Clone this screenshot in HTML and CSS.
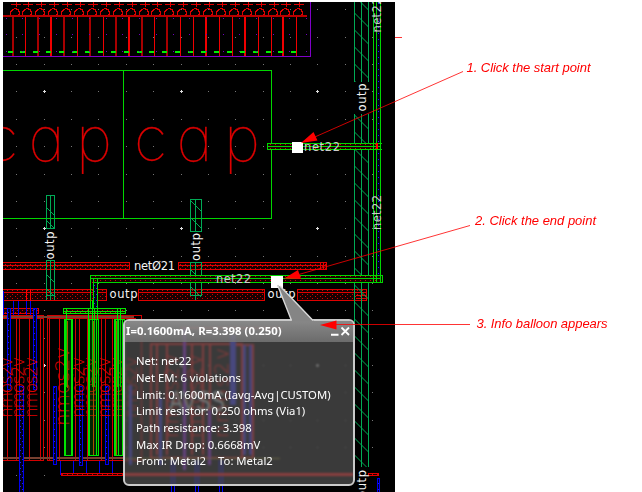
FILE: index.html
```html
<!DOCTYPE html>
<html lang="en">
<head>
<meta charset="utf-8">
<title>Info balloon</title>
<link rel="stylesheet" href="styles.css">
</head>
<body>
<main class="figure">
<svg class="layout" width="642" height="492" viewBox="0 0 642 492">
  <defs>
    <clipPath id="view"><rect x="3" y="2" width="392" height="490"/></clipPath>
    <pattern id="redDots" width="5" height="4" patternUnits="userSpaceOnUse"><rect width="5" height="4" fill="#170000"/><path d="M0 .5h1M2 2.5h1" stroke="#d00000"/></pattern>
    <pattern id="blueDots" width="4" height="6" patternUnits="userSpaceOnUse"><rect width="4" height="6" fill="#000018"/><path d="M0 .5h1M2 3.500h1" stroke="#1919ff"/></pattern>
    <pattern id="hatch" width="14" height="17" patternUnits="userSpaceOnUse" x="354.5" y="13"><path d="M0 0L14 14M0 17L3 20" stroke="#00aa55" fill="none"/></pattern>
  </defs>
  <g clip-path="url(#view)">
    <rect x="3" y="2" width="392" height="490" fill="#000"/>
    <g id="grid"></g>

    <g id="fingers" fill="none"></g>
    <path class="purple" d="M3 56.5H310.5V2"/>
    <path class="green" d="M3 70.5H271.5V218.5H3M123.5 70V218"/>
    <g class="cap">
      <text x="-15">c</text><text x="28.500">a</text><text x="76">p</text>
      <text x="134">c</text><text x="176.500">a</text><text x="224">p</text>
    </g>

    <g class="band">
      <rect x="-2.500" y="262.500" width="132" height="7"/><rect x="178.500" y="262.500" width="148" height="7"/>
      <rect x="-2.500" y="289.500" width="109" height="11"/><rect x="138.500" y="289.500" width="126" height="11"/>
      <rect x="297.500" y="289.500" width="69" height="11"/>
      <path d="M3 265.500H129M178 265.500H326M3 292.500H106M138 292.500H264M297 292.500H366M320.500 262V269M323.500 262V269M356 295.500H366M356 298.500H366"/>
      <rect x="-2.500" y="308.500" width="41" height="5"/>
    </g>

    <g class="teal">
      <rect x="46.500" y="195.500" width="8" height="33"/><path d="M50.500 195V228M46 207l8 8M46 220l8 8"/>
      <rect x="46.500" y="260.500" width="8" height="35"/><path d="M50.500 260V300M46 274l8 8M46 288l8 8M46.500 295v5M54.500 295v5"/>
      <rect x="190.500" y="199.500" width="11" height="32"/><path d="M195.500 199V231M190 200l11 11M190 217l11 11"/>
      <rect x="190.500" y="262.500" width="11" height="33"/><path d="M195.500 262V300M190 269l11 11M190 286l11 11"/>
      <path d="M354.500 2V82M361.500 2V82M368.500 2V82M354.500 114V467M361.500 114V467M368.500 114V467"/>
      <path class="bare" d="M354.500 2H368.500V82H354.500zM354.500 114H368.500V467H354.500z"/>
    </g>

    <rect x="377" y="2" width="3" height="279" fill="url(#blueDots)"/>
    <rect x="268" y="144" width="112" height="5" fill="url(#redDots)"/>
    <rect x="91" y="276" width="291" height="7" fill="url(#redDots)"/>
    <path class="green" d="M373.500 2V283M376.500 2V283M380.500 2V283M381.500 143.500H267.500V149.500H381.500M267 146.500H380M90.500 313V275.500H382.500V282.500H93M90 278.500H380M97.500 279V313M93.500 279V313"/>
    <path d="M377 143V149" stroke="#f00" stroke-width="2"/>
    <rect x="94" y="284" width="3" height="24" fill="url(#blueDots)"/>

    <!-- transistor array -->
    <g fill="none" stroke="#d40000">
      <path d="M3 315.500H43.500V460.500H3M47.500 315.500H141.500V460.500H47.500zM3 318.500H43M48 318.500H136M3 457.500H125M7.500 318V460M16.500 318V460M19.500 318V460M29.500 318V460M40.500 318V460M49.500 318V460M59.500 318V460M75.500 318V460M79.500 318V460M87.500 318V460M101.500 318V460M105.500 318V460M112.500 318V460"/>
      <path d="M3 317H134M3 458H125" stroke="#784030" stroke-width="2"/>
    </g>
    <g class="blue">
      <path d="M3.500 291V315M13.500 301V315M18.500 301V315M26.500 291V315M30.500 291V315"/>
      <rect x="7.500" y="308.500" width="3" height="81"/><rect x="33.500" y="308.500" width="3" height="81"/>
      <rect x="19.500" y="386.500" width="4" height="110"/><rect x="53.500" y="386.500" width="3" height="78"/>
      <rect x="79.500" y="386.500" width="3" height="79"/><rect x="105.500" y="386.500" width="3" height="78"/>
      <path d="M60.500 461V475M73.500 461V475M86.500 461V475M99.500 461V475M112.500 461V475M379.500 493V478.500H377.500V493"/>
    </g>
    <g class="nmos">
      <text transform="translate(12 418) rotate(-90)" textLength="61">nmos2v</text>
      <text transform="translate(24 418) rotate(-90)" textLength="61">nmos2v</text>
      <text transform="translate(37 418) rotate(-90)" textLength="61">nmos2v</text>
      <text class="large" transform="translate(69 426) rotate(-90)" textLength="79">nmos2v</text>
      <text transform="translate(84 418) rotate(-90)" textLength="61">nmos2v</text>
      <text transform="translate(96 418) rotate(-90)" textLength="61">nmos2v</text>
      <text transform="translate(110 418) rotate(-90)" textLength="61">nmos2v</text>
      <text transform="translate(122 418) rotate(-90)" textLength="61">nmos2v</text>
      <text transform="translate(137 418) rotate(-90)" textLength="61">nmos2v</text>
    </g>
    <path d="M26.500 289V301M30.500 289V301" stroke="#f00"/>
    <g class="band"><rect x="61.500" y="473.500" width="292" height="2"/><rect x="368.500" y="473.500" width="10" height="2"/></g>
    <g class="green bars">
      <rect class="dots" x="63.500" y="308.500" width="62" height="5"/><path d="M63 311.500H125"/>
      <path d="M66.500 308V387M88.500 308V320M92.500 300V387M94.500 308V387M97.500 308V320M117.500 308V387M120.500 308V387"/>
      <rect x="64.500" y="319.500" width="8" height="136"/><rect x="88.500" y="319.500" width="10" height="136"/><rect x="114.500" y="319.500" width="10" height="136"/>
      <path d="M65.500 320V455M71.500 320V455M89.500 320V455M96.500 320V455M115.500 320V455M118.500 320V455M122.500 320V455"/>
    </g>
    <path d="M67.500 321V388M93.500 321V455M116.500 321V455" stroke="#a65300"/>

    <!-- devices under the balloon -->
    <g fill="none">
      <path d="M151 343.500H242V458H151zM157 345V455M167 345V455M192 345V455M203 345V455M210 345V455M236 345H253V458H240M180 328H282" stroke="#d01010" stroke-width="2"/>
      <path d="M184 328V470" stroke="#7b18c0" stroke-width="3"/>
      <path d="M209 410V465" stroke="#7b18c0" stroke-width="3"/>
      <path d="M130 385V465M160 398V465M244 345V455" stroke="#2929c0" stroke-width="3"/>
      <path d="M233 335V405" stroke="#2929c8" stroke-width="6"/>
      <path d="M250 345V455" stroke="#2020c0" stroke-width="3"/>
      <path d="M171.500 460V493M174.500 460V493M195.500 460V493M198.500 460V493M219.500 460V493M222.500 460V493" stroke="#00f"/>
      <path d="M124 458.500H280" stroke="#877b20"/>
      <path d="M124 474.500H353" stroke="#f01010" stroke-width="3"/>
    </g>
    <g class="nmos">
      <text class="large" transform="translate(178 438) rotate(-90)" textLength="84">nmos2v</text>
      <text class="large" transform="translate(201 438) rotate(-90)" textLength="84">nmos2v</text>
      <text class="large" transform="translate(228 438) rotate(-90)" textLength="90">nmos2v</text>
    </g>
    <text class="avss" x="169" y="411" textLength="56" lengthAdjust="spacingAndGlyphs">AVSS</text>

    <g class="net">
      <text x="134" y="270" textLength="41">netØ21</text>
      <text x="109.500" y="298" textLength="28">outp</text>
      <text x="267.500" y="298" textLength="28">outp</text>
      <text class="dim" x="216" y="282.500" textLength="35">net22</text>
      <text class="dim" x="304" y="151" textLength="36">net22</text>
      <text transform="translate(53.500 259.500) rotate(-90)" textLength="28">outp</text>
      <text transform="translate(199.500 261) rotate(-90)" textLength="28">outp</text>
      <text transform="translate(365.500 111.500) rotate(-90)" textLength="28">outp</text>
      <text transform="translate(366 498) rotate(-90)" textLength="28">outp</text>
      <text class="dim" transform="translate(381 32.500) rotate(-90)" textLength="35">net22</text>
      <text class="dim" transform="translate(381 230) rotate(-90)" textLength="35">net22</text>
    </g>
    <path d="M292 141.500h11v11.500h-11zM271 276h11.500v11.500h-11.500z" fill="#fff"/>
  </g>
</svg>

<section class="balloon">
  <header class="balloon-head">
    <span class="balloon-title">I=0.1600mA, R=3.398 (0.250)</span>
    <svg class="controls" width="22" height="14" viewBox="0 0 22 14"><path d="M0 9.700h7.500" stroke-width="2"/><path d="M10.500 2.500l7.500 7.500M18 2.500l-7.500 7.500" stroke-width="1.800"/></svg>
  </header>
  <div class="balloon-body">
    <div>Net: net22</div>
    <div>Net EM: 6 violations</div>
    <div>Limit: 0.1600mA (Iavg-Avg|CUSTOM)</div>
    <div>Limit resistor: 0.250 ohms (Via1)</div>
    <div>Path resistance: 3.398</div>
    <div>Max IR Drop: 0.6668mV</div>
    <div class="route"><span>From: Metal2</span><span>To: Metal2</span></div>
  </div>
</section>

<svg class="callouts" width="642" height="492" viewBox="0 0 642 492">
  <path d="M277.500 285L292 321.500H314L313 320L281 287z" fill="#858585"/>
  <path d="M277.500 285L291.500 320.500M280 286L313 320.500" stroke="#d8d8d8" stroke-width="1.400"/>
  <g class="arrow">
    <path d="M463 71.500L308 140M470 225.500L290 277M470 324.500H330M395 37.500H402"/>
    <path class="tip" d="M301 143L313.500 132L317.500 140.500zM284 278.500L298 270L301 279zM320 325L336.500 320.500V329.500z"/>
  </g>
  <g class="caption">
    <text x="466.500" y="72" textLength="124">1. Click the start point</text>
    <text x="475" y="225" textLength="121">2. Click the end point</text>
    <text x="476.500" y="328" textLength="131">3. Info balloon appears</text>
  </g>
</svg>
</main>
<script src="layout.js"></script>
</body>
</html>
```
FILE: styles.css
```css
body { margin: 0; background: #fff; }
.figure { position: relative; width: 642px; height: 492px; overflow: hidden; }
.layout, .callouts { position: absolute; inset: 0; display: block; }
.layout { shape-rendering: crispEdges; }

.purple { fill: none; stroke: #8000c8; }
.green { fill: none; stroke: #00d600; }
.cap { fill: #e00000; stroke: #c00000; stroke-width: .3; font: 100 62px Inter, "DejaVu Sans", sans-serif; font-feature-settings: "cv11"; }
.cap text { transform: translateY(161px); }
.band { fill: url(#redDots); stroke: #e00000; }
.teal { fill: none; stroke: #00aa55; }
.teal .bare { fill: url(#hatch); stroke: none; }
.nmos { fill: #e00000; font: 200 17px "DejaVu Sans", sans-serif; }
.nmos .large { font-size: 20px; }
.blue { fill: url(#blueDots); stroke: #0000f0; }
.bars { stroke: #00e600; }
.bars rect { fill: rgba(0, 120, 0, .3); }
.bars .dots { fill: url(#redDots); }
.avss { fill: #aaa; font: 29px "Liberation Sans", sans-serif; }
.net { fill: #f4f4f4; font: 400 11.5px "DejaVu Sans", sans-serif; }
.net .dim { fill: #ccc; }

.balloon {
  position: absolute; left: 123px; top: 319px; width: 232px; height: 167px;
  box-sizing: border-box; border: 2px solid #c9c9c9; border-radius: 6px;
  overflow: hidden; color: #fff; background: rgba(88, 88, 88, .66);
  backdrop-filter: blur(1.2px);
  font: 11.3px "Noto Sans", "Open Sans", sans-serif;
}
.balloon-head {
  display: flex; align-items: center; justify-content: space-between;
  height: 21px; padding: 0 0 0 1px; box-sizing: border-box;
  background: linear-gradient(rgba(155, 155, 155, .8), rgba(120, 120, 120, .8));
}
.balloon-title { font: bold 11.3px "Noto Sans", sans-serif; letter-spacing: .07px; white-space: nowrap; position: relative; top: -1px; }
.controls { fill: none; stroke: #fff; }
.balloon-body { padding: 11.4px 0 0 11px; line-height: 16.65px; white-space: nowrap; }
.route { display: flex; gap: 12px; }

.arrow { fill: none; stroke: #f00; stroke-width: .8; }
.arrow .tip { fill: #f00; stroke: none; }
.caption { fill: #f00; font: italic 13px "Liberation Sans", sans-serif; }
```
FILE: layout.js
```js
const NS = 'http://www.w3.org/2000/svg';
function add(parent, name, attrs) {
  const el = document.createElementNS(NS, name);
  for (const key in attrs) el.setAttribute(key, attrs[key]);
  parent.appendChild(el);
}

// Snap grid; every fifth column and row is a major point.
const grid = document.getElementById('grid');
for (let i = 0; i < 14; i++) {
  for (let j = 0; j < 18; j++) {
    const x = Math.floor(16.8 + i * 27.37), y = Math.floor(9.8 + j * 27.37);
    const major = i % 5 === 1 && j % 5 === 3;
    add(grid, 'path', major
      ? { d: `M${x - 1} ${y + .5}h3M${x + .5} ${y - 1}v3`, stroke: '#ddd' }
      : { d: `M${x} ${y + .5}h1`, stroke: '#777' });
  }
}

// Finger contacts along the top edge.
const fingers = document.getElementById('fingers');
for (let i = 0; i < 23; i++) {
  const x = Math.floor(13 + i * 12.9);
  const dark = i % 2 === 0 && i < 13;
  add(fingers, 'path', { d: dark || i % 3 === 0 ? `M${x} 16V56` : `M${x + .5} 16V56`, stroke: dark ? '#a80000' : '#f00000', 'stroke-width': dark || i % 3 === 0 ? 2 : 1 });
  add(fingers, 'path', { d: `M${x - 2.5} 15.500V12L${x} 9.500L${x + 2} 8.500L${x + 5} 9.500L${x + 6.500} 12.500V14L${x + 5} 15.500M${x - 2} 4.500h10M${x + 3.500} 2v5`, stroke: '#e00000' });
  add(fingers, 'path', { d: `M${x - 5} 52h5`, stroke: '#00f000', 'stroke-width': 2 });
}
add(fingers, 'path', { d: 'M3 16H307', stroke: '#b80000', 'stroke-width': 2 });
for (let i = 0; i < 19; i++) {
  const x = Math.floor(6 + i * 16.7);
  add(fingers, 'path', { d: `M${x} 18.500h1M${x} 34.500h1M${x} 51.500h1`, stroke: '#7000c0' });
}
```
